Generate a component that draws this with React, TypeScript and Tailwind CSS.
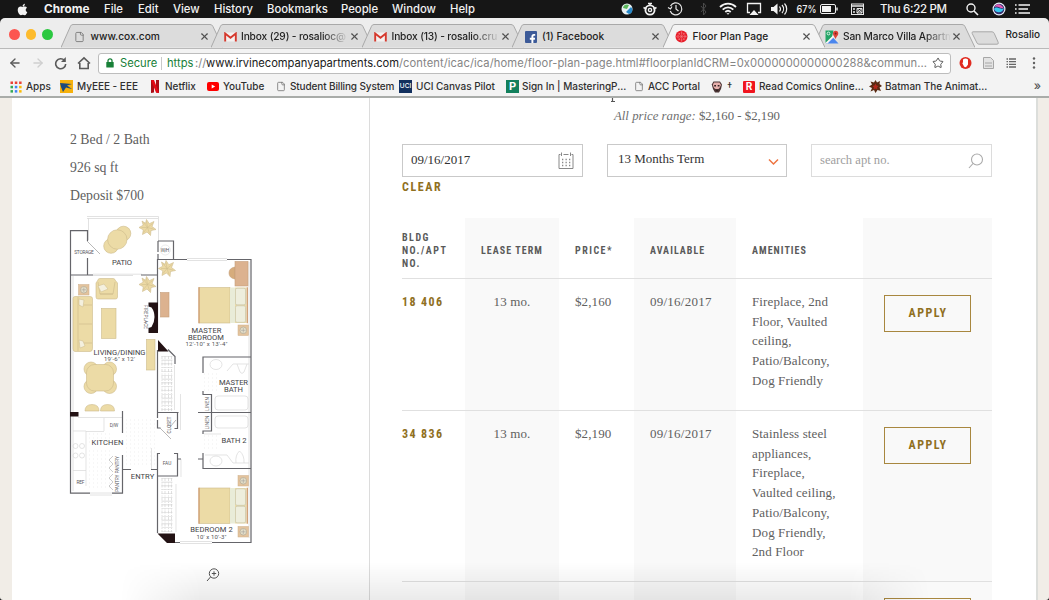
import type { ReactNode } from "react";
import {
  LuArrowLeft,
  LuArrowRight,
  LuFile,
  LuStar,
  LuX,
} from "react-icons/lu";
import { FaApple, FaFacebookF } from "react-icons/fa";

/* ---------- macOS menu bar ---------- */

const menus: [string, string][] = [
  ["File", "w-[34px]"],
  ["Edit", "w-[35px]"],
  ["View", "w-[41px]"],
  ["History", "w-[53px]"],
  ["Bookmarks", "w-[74px]"],
  ["People", "w-[51px]"],
  ["Window", "w-[58px]"],
  ["Help", "w-[40px]"],
];

function MenuBar() {
  return (
    <div className="flex h-[18px] shrink-0 items-center bg-[#161616] pt-[1px] pl-[16px] text-[11.3px] font-medium whitespace-nowrap text-[#f2f2f2]">
      <FaApple className="mr-[15px] mb-[1px] size-[13px]" />
      <span className="w-[60px] text-[11.8px] font-bold">Chrome</span>
      {menus.map(([label, width]) => (
        <span key={label} className={width}>
          {label}
        </span>
      ))}
      <svg className="mb-[1px] ml-[130px] h-[18px] w-[420px]" viewBox="620 0 420 18" fill="none">
        <circle cx="627" cy="9" r="5.5" fill="#e9f1f4" />
        <path d="M623 8a4 4 0 0 1 6-3l-2 4z" fill="#5cb85c" />
        <path d="M626 12l5-5a4 4 0 0 1-2 7z" fill="#2688c9" />
        <g stroke="#f2f2f2">
          <circle cx="650" cy="10" r="4.6" strokeWidth="1.8" />
          <circle cx="650" cy="10" r="1.6" strokeWidth="1.4" />
          <path d="M648 3.500h4M650 3.500v2M643.500 7.500l3 1.500M656.500 7.500l-3 1.500" strokeWidth="1.5" />
        </g>
        <g stroke="#e8e8e8" strokeWidth="1.2">
          <path d="M670.5 6a6 6 0 1 1-.3 5M668 7.5l2.5 1.5 1.5-2.5M676 5v4l2.500 2" />
        </g>
        <path d="M701 6l5 6-2.500 3V3l2.500 3-5 6" stroke="#4a4a4a" strokeWidth="1" />
        <g stroke="#f5f5f5" strokeWidth="1.8">
          <path d="M720 7c4.500-4.500 11.500-4.500 16 0M722.700 9.700c3-3 7.600-3 10.600 0M725.300 12c1.700-1.600 3.700-1.600 5.400 0" />
        </g>
        <path d="M726.500 13.200l1.500 1.600 1.500-1.600z" fill="#fff" />
        <path d="M750 12.500h-2.500v-9h13v9H758" stroke="#f2f2f2" strokeWidth="1.300" />
        <path d="M749.500 15l4.500-5 4.500 5z" fill="#f2f2f2" />
        <path d="M771 7h2.500l4-3.500v11l-4-3.500H771z" fill="#f2f2f2" />
        <path d="M779.500 6.500a4 4 0 0 1 0 5M782 5a6 6 0 0 1 0 8M784.500 3.500a8 8 0 0 1 0 11" stroke="#f2f2f2" strokeWidth="1.200" />
        <rect x="820.500" y="4.500" width="15" height="9" rx="1.500" stroke="#f2f2f2" />
        <rect x="822" y="6" width="9" height="6" fill="#f2f2f2" />
        <path d="M837 7.500v3" stroke="#f2f2f2" strokeWidth="1.400" />
        <rect x="851.500" y="4" width="12" height="10.500" stroke="#e8e8e8" />
        <path d="M851.500 6h12M853 9h2M853 12h2" stroke="#e8e8e8" strokeWidth="1.500" />
        <path d="M857 8.500h5v4.500h-5zM857 8.500l5 4.500M862 8.500l-5 4.500" stroke="#e8e8e8" />
        <circle cx="971" cy="8" r="4" stroke="#f2f2f2" strokeWidth="1.400" />
        <path d="M974 11l4 4" stroke="#f2f2f2" strokeWidth="1.600" />
        <circle cx="999" cy="9" r="6.500" fill="#e8ecf8" />
        <circle cx="999" cy="9" r="5.300" fill="#33306e" />
        <path d="M994 9c3-4 7 2 10-1-1 5-8 6-10 1z" fill="#37c8f0" />
        <path d="M994.500 7c3-5 7-2 9 1-3 1-6-3-9-1z" fill="#e25bb5" />
        <path d="M1015 5h1.600M1015 9h1.600M1015 13h1.600M1018.500 5H1030M1018.500 9H1028M1018.500 13H1030" stroke="#f5f5f5" strokeWidth="1.700" />
        <text x="796.500" y="13" fontSize="10.200" fontWeight="500" fill="#f2f2f2" textLength="20" lengthAdjust="spacingAndGlyphs">67%</text>
        <text x="880" y="13" fontSize="11.500" fontWeight="500" fill="#f2f2f2" textLength="67">Thu 6:22 PM</text>
      </svg>
    </div>
  );
}

/* ---------- small brand marks ---------- */

function Gmail() {
  return (
    <svg className="h-[10px] w-[13px]" viewBox="0 0 13 10">
      <path d="M1 .5h11v9H1z" fill="#f4f1f0" />
      <path d="M1.200 9.500v-8l5.300 4.200 5.300-4.200v8" fill="none" stroke="#d5392d" strokeWidth="1.900" />
    </svg>
  );
}

function Facebook() {
  return (
    <span className="flex size-[12px] items-end justify-center overflow-hidden rounded-[1px] bg-[#3c5a98]">
      <FaFacebookF className="-mb-px ml-[3px] size-[10px] text-white" />
    </span>
  );
}

function RedDisc() {
  return (
    <svg className="size-[13px]" viewBox="0 0 13 13" fill="none">
      <circle cx="6.500" cy="6.500" r="6" fill="#e8202c" />
      <circle cx="6.500" cy="6.500" r="3.600" stroke="#f9b5b8" strokeWidth=".6" strokeDasharray="1.300 1" />
      <path d="M6.500 1v11M1 6.500h11M2.600 2.600l7.800 7.800M10.400 2.600l-7.800 7.800" stroke="#f28a90" strokeWidth=".4" />
    </svg>
  );
}

function MapsIcon() {
  return (
    <svg className="size-[14px] shrink-0" viewBox="0 0 14 14">
      <rect x=".5" y=".5" width="13" height="13" rx="1" fill="#e3e3e1" />
      <path d="M.5.5h8L7 7 .5 13z" fill="#23a566" />
      <path d="M1 13.500L7.500 7l6 6.500z" fill="#4a86ee" />
      <path d="M.5 13L8 5.500l1 1.500L2.500 13.500z" fill="#f4f4f2" />
      <path d="M10.500 9C9 6 8 5.200 8 3.500a2.600 2.600 0 0 1 5.300 0C13.300 5.200 12 6 10.500 9z" fill="#dc4437" />
      <circle cx="10.600" cy="3.500" r=".9" fill="#7c1f18" />
      <circle cx="3.500" cy="3.500" r="1.400" fill="none" stroke="#fff" strokeWidth=".8" />
    </svg>
  );
}

function PageIcon() {
  return <LuFile className="h-[12px] w-[11px] text-[#7b7b7b]" />;
}

/* ---------- tab strip ---------- */

type TabProps = { icon: ReactNode; title: string; active?: boolean; fade?: boolean };

function Tab({ icon, title, active, fade }: TabProps) {
  return (
    <div className={active ? "relative z-10 -mr-[11.500px] h-[24px] w-[162px] shrink-0" : "relative -mr-[11.500px] h-[24px] w-[162px] shrink-0"}>
      <svg className="absolute inset-0 h-[24px] w-[162px]" viewBox="0 0 162 24">
        <path
          d="M0 23.500 9.500 2.200Q10.200.5 12 .5H149Q151 .5 151.800 2.200L162 23.500"
          fill={active ? "#f3f3f3" : "#dcdcdc"}
          stroke="#a9a9a9"
        />
        {active && <path d="M1 23.600H161" stroke="#f3f3f3" strokeWidth="1.500" />}
      </svg>
      <div className="relative flex h-full items-center pt-[1px] pl-[12px]">
        <span className="flex w-[14px] shrink-0 justify-center">{icon}</span>
        <span className={fade ? "ml-[4px] w-[108px] shrink-0 mask-r-from-75% tracking-[-0.150px] whitespace-nowrap" : "ml-[4px] w-[108px] shrink-0 whitespace-nowrap"}>
          {title}
        </span>
        <LuX className="size-[11px] shrink-0 text-[#505050]" strokeWidth={2.4} />
      </div>
    </div>
  );
}

function TabStrip() {
  return (
    <div className="flex h-[30px] shrink-0 items-end rounded-t-[5px] bg-[#ededed] pl-[9px] text-[10.200px] font-medium text-[#222]">
      <div className="mr-[8px] flex h-[27px] shrink-0 items-center gap-[6px]">
        <i className="size-[10.500px] rounded-full bg-[#fc5650]" />
        <i className="size-[10.500px] rounded-full bg-[#fdbb2d]" />
        <i className="size-[10.500px] rounded-full bg-[#2bc840]" />
      </div>
      <Tab icon={<PageIcon />} title="www.cox.com" />
      <Tab icon={<Gmail />} title="Inbox (29) - rosalioc@" fade />
      <Tab icon={<Gmail />} title="Inbox (13) - rosalio.cru" fade />
      <Tab icon={<Facebook />} title="(1) Facebook" />
      <Tab icon={<RedDisc />} title="Floor Plan Page" active />
      <Tab icon={<MapsIcon />} title="San Marco Villa Apartm" fade />
      <svg className="mb-[3px] ml-[7px] h-[14px] w-[30px] shrink-0" viewBox="0 0 30 14">
        <path d="M2 .8h19q1.500 0 2.200 1.500l4 9q.6 1.900-1.200 1.900H8q-1.500 0-2-1.200L1.200 2.500Q.6.800 2 .8z" fill="#dcdcdc" stroke="#a9a9a9" />
      </svg>
      <span className="mb-[6px] ml-[5px] text-[10px] whitespace-nowrap">Rosalio</span>
    </div>
  );
}

/* ---------- address bar ---------- */

function AddressBar() {
  return (
    <div className="flex h-[29px] shrink-0 items-center border-t border-[#b9b9b9] bg-[#f3f3f3] pl-[8px]">
      <LuArrowLeft className="size-[14px] text-[#5a5a5a]" strokeWidth={2.3} />
      <LuArrowRight className="ml-[9px] size-[14px] text-[#cfcfcf]" strokeWidth={2.3} />
      <svg className="ml-[8px] h-[14px] w-[40px]" viewBox="0 0 40 14" fill="none" stroke="#5a5a5a" strokeWidth="1.600">
        <path d="M11.500 4.500A5 5 0 1 0 12.700 8" />
        <path d="M12.800 1v5H8z" fill="#5a5a5a" stroke="none" />
        <path d="M25 7.500 31 1.800l6 5.700M26.800 7v5.500h8.400V7" />
      </svg>
      <div className="ml-[5px] flex h-[21px] w-[853px] shrink-0 items-center rounded-[3px] border border-[#bdbdbd] bg-white pl-[7px] text-[11.200px] whitespace-nowrap text-[#858585]">
        <svg className="h-[10px] w-[8px] shrink-0" viewBox="0 0 8 10">
          <rect x=".3" y="4" width="7.400" height="5.500" rx=".6" fill="#188038" />
          <path d="M2 4.500V2.800a2 2 0 0 1 4 0v1.700" fill="none" stroke="#188038" strokeWidth="1.300" />
        </svg>
        <span className="ml-[6px] w-[41px] shrink-0 text-[#188038]">Secure</span>
        <i className="mr-[5px] h-[13px] w-px shrink-0 bg-[#c9c9c9]" />
        <span className="w-[28px] shrink-0 text-[#188038]">https</span>
        <span className="w-[11px] shrink-0">://</span>
        <span className="w-[193px] shrink-0 tracking-[-0.030px] text-[#202020]">www.irvinecompanyapartments.com</span>
        <span className="w-[533px] shrink-0 tracking-[0.070px]">/content/icac/ica/home/floor-plan-page.html#floorplanIdCRM=0x0000000000000288&amp;commun...</span>
        <LuStar className="size-[12px] shrink-0 text-[#555]" strokeWidth={2} />
      </div>
      <svg className="ml-[7px] h-[16px] w-[80px] shrink-0" viewBox="958 0 80 16" fill="none">
        <circle cx="965.500" cy="8" r="6" fill="#e02b20" />
        <path d="M963 4.500q2.500-2 5 0v5q-2 4-4 2l-2-4 1 .5z" fill="#fff" />
        <path d="M983.500 2.500h7l3 3v8h-10z" fill="#e3e3e3" stroke="#a6a6a6" />
        <path d="M985 8h7M985 11h7" stroke="#a6a6a6" />
        <path d="M1006.500 4h1.500M1006.500 6.700h1.500M1006.500 9.400h1.500M1006.500 12h1.500M1009 4h7M1009 6.700h7M1009 9.400h7M1009 12h7" stroke="#666" strokeWidth="1.300" />
        <g fill="#606060">
          <circle cx="1034" cy="3.500" r="1.200" />
          <circle cx="1034" cy="8" r="1.200" />
          <circle cx="1034" cy="12.500" r="1.200" />
        </g>
      </svg>
    </div>
  );
}

/* ---------- bookmarks ---------- */

function AppsIcon() {
  const colors = ["#ea4335", "#ea4335", "#ea4335", "#34a853", "#4285f4", "#fbbc05", "#34a853", "#4285f4", "#fbbc05"];
  return (
    <svg className="size-[12px]" viewBox="0 0 12 12">
      {colors.map((c, i) => (
        <rect key={i} x={(i % 3) * 4.3 + 0.5} y={Math.floor(i / 3) * 4.3 + 0.5} width="2.500" height="2.500" fill={c} />
      ))}
    </svg>
  );
}

function Bookmark({ icon, iconWidth, label, width }: { icon: ReactNode; iconWidth: string; label: string; width: string }) {
  return (
    <div className={"flex shrink-0 items-center " + width}>
      <span className={"flex shrink-0 items-center " + iconWidth}>{icon}</span>
      <span className="whitespace-nowrap">{label}</span>
    </div>
  );
}

function Bookmarks() {
  return (
    <div className="flex h-[21px] shrink-0 items-center border-b-2 border-[#a9aca9] bg-[#f3f3f3] pl-[10px] text-[10px] font-medium tracking-[-0.020px] text-[#303030]">
      <Bookmark width="w-[50px]" iconWidth="w-[16px]" label="Apps" icon={<AppsIcon />} />
      <Bookmark
        width="w-[90px]"
        iconWidth="w-[17px]"
        label="MyEEE - EEE"
        icon={
          <svg className="size-[13px]" viewBox="0 0 13 13">
            <path d="M0 0h13v13H0z" fill="#f6b10c" />
            <path d="M0 3l12 1-5 1.500 5 3.500-6-1.500L3 12 1 7z" fill="#1c4a7d" />
          </svg>
        }
      />
      <Bookmark
        width="w-[57px]"
        iconWidth="w-[15px]"
        label="Netflix"
        icon={
          <svg className="h-[13px] w-[10px]" viewBox="0 0 10 13">
            <path d="M1 0h3v12.500L1 13zM6 0h3v13l-3-.5z" fill="#a90d15" />
            <path d="M1 0h3l5 13-3-.5z" fill="#e50914" />
          </svg>
        }
      />
      <Bookmark
        width="w-[69px]"
        iconWidth="w-[16px]"
        label="YouTube"
        icon={
          <svg className="h-[9px] w-[12px]" viewBox="0 0 12 9">
            <rect width="12" height="9" rx="2" fill="#f00" />
            <path d="M4.700 2.500v4l3.500-2z" fill="#fff" />
          </svg>
        }
      />
      <Bookmark
        width="w-[123px] tracking-[-0.130px]"
        iconWidth="w-[14px]"
        label="Student Billing System"
        icon={<LuFile className="h-[11px] w-[10px] text-[#777]" />}
      />
      <Bookmark
        width="w-[107px]"
        iconWidth="w-[17px]"
        label="UCI Canvas Pilot"
        icon={<span className="flex size-[13px] items-center justify-center bg-[#12305e] text-[6.500px] text-white">UCI</span>}
      />
      <Bookmark
        width="w-[128px]"
        iconWidth="w-[16px]"
        label="Sign In | MasteringP..."
        icon={<span className="flex size-[13px] items-center justify-center bg-[#12805c] text-[11px] font-bold text-white">P</span>}
      />
      <Bookmark width="w-[77px]" iconWidth="w-[14px]" label="ACC Portal" icon={<LuFile className="h-[11px] w-[10px] text-[#777]" />} />
      <Bookmark
        width="w-[32px]"
        iconWidth="w-[16px]"
        label="†"
        icon={
          <svg className="size-[12px]" viewBox="0 0 12 12">
            <path d="M2.500.5h6.500L11 3.500 10 8 8 11.500H4L2 8 .8 3.500z" fill="#4a3434" />
            <path d="M3 1.500h5.500L10 4 8.500 7l-1 1h-3L3 7 1.800 4z" fill="#e7b0ad" />
            <path d="M3.200 4h1.800v1.500H3.200zM6.700 4h1.800v1.500H6.700zM5 9h2v1H5z" fill="#332222" />
          </svg>
        }
      />
      <Bookmark
        width="w-[126px]"
        iconWidth="w-[16px]"
        label="Read Comics Online..."
        icon={<span className="flex size-[12px] items-center justify-center rounded-[1px] bg-[#f0141e] text-[10px] font-bold text-white">R</span>}
      />
      <Bookmark
        width="w-[149px]"
        iconWidth="w-[16px]"
        label="Batman The Animat..."
        icon={
          <svg className="size-[13px]" viewBox="0 0 13 13">
            <path d="M6.500 0 8 2.500 11 1l-.5 3L13 6l-2.500 1.500L12 11 8.500 10 6.500 13 5 10l-3.500 1.500L3 8 0 6.500 3 4.500 1.500 1.500 5 2.500z" fill="#5a2a12" />
            <path d="M6.500 3.500 7.500 5.500l2 .5-1.500 1.500.5 2-2-1-2 1 .5-2L3.500 6l2-.5z" fill="#b3261a" />
          </svg>
        }
      />
      <span className="mr-[8px] mb-[1px] ml-auto text-[12px] text-[#555]">»</span>
    </div>
  );
}

/* ---------- floor plan ---------- */

function Plant({ x, y }: { x: number; y: number }) {
  return (
    <g transform={`translate(${x} ${y})`}>
      <path
        d="M-1-8 1.800-3.800 6.500-6 4.500-1 8.500 2 3.500 3 3 8-.5 4.500-5 7-4.200 2.300-8.500 0-4.300-2.300-5.500-6.500-2-4.200z"
        fill="#ecd9a4"
        stroke="#cdbb8b"
        strokeWidth=".6"
      />
      <path d="M0 0-1-6M0 0 5-4M0 0l6 1.500M0 0l2 6M0 0l-4 5M0 0h-6M0 0l-4-5" stroke="#cdbb8b" strokeWidth=".5" />
    </g>
  );
}

function Lamp({ x, y }: { x: number; y: number }) {
  return (
    <g transform={`translate(${x} ${y})`}>
      <rect x="-5" y="-5" width="10.500" height="10.500" fill="#e3c39d" stroke="#cdae88" strokeWidth=".5" />
      <circle r="3.300" cx=".3" cy=".3" fill="#e6dfc8" stroke="#a7a595" strokeWidth=".6" />
      <path d="M-2 .3h4.600M.3-2v4.600" stroke="#999" strokeWidth=".5" />
    </g>
  );
}

function Bed({ y }: { y: number }) {
  return (
    <g transform={`translate(199 ${y})`} strokeWidth=".6">
      <rect width="31" height="35.500" fill="#ecdba6" stroke="#cdbb8b" />
      <path d="M0-.3v36" stroke="#cf9d72" strokeWidth="1.300" />
      <rect x="31" width="5" height="35.500" fill="#e9ecd8" />
      <rect x="36" width="11.500" height="35.500" fill="#ecdba6" />
      <rect x="36.500" y=".8" width="10" height="16.500" rx="1.500" fill="#eeeedd" stroke="#c4c2a8" />
      <rect x="36.500" y="18.300" width="10" height="16.500" rx="1.500" fill="#eeeedd" stroke="#c4c2a8" />
      <path d="M48.300-.3v36" stroke="#cf9d72" strokeWidth="1.300" />
    </g>
  );
}

function Hatch({ y, h }: { y: number; h: number }) {
  return (
    <g stroke="#d2d2d2" strokeWidth=".7">
      <path d={`M162 ${y}v${h}M165 ${y}v${h}M168.500 ${y}v${h}M171.500 ${y}v${h}`} strokeDasharray="3 1.500 1 1" />
      <path d={`M167 ${y}v${h}`} strokeWidth="11" strokeDasharray=".6 3.200" />
    </g>
  );
}

function FloorPlan() {
  return (
    <svg className="h-[340px] w-[200px]" viewBox="60 210 200 340" fill="none" fontFamily="Roboto, 'Liberation Sans', sans-serif">
      <path d="M87 216.500h71.500V241M87 218.500h71M88.500 218v22M93 274.200h49M93 275.500h40M187 258.500h40M187 260.500h40M90 493h22M90 495h22M180 541.500h32M180 543.500h32M249 262v276M73 276v215" stroke="#dadada" strokeWidth=".8" />
      <g stroke="#d8d8d8" strokeWidth=".7">
        <path d="M86 431v55M73 431h13M86 431.500h18M78 417.500h44M73 470.500h13M104 418v13M151.500 448v21M174.500 365v45M180.500 394v36M176 484v48M181 459v18" />
        <circle cx="75.500" cy="446" r="2.500" /><circle cx="82" cy="446" r="2.500" />
        <circle cx="75.500" cy="455.500" r="2.500" /><circle cx="82" cy="455.500" r="2.500" />
        <rect x="215" y="396" width="33" height="14" rx="3" /><rect x="215" y="416" width="33" height="12" rx="3" />
        <ellipse cx="216" cy="364.500" rx="6" ry="5" /><ellipse cx="216" cy="461" rx="6" ry="5" />
        <path d="M227 371l6-7h16M237 364l3 8q2 3 4 0l3-8M205 455h22l6 8h16M236 463q-1-8 3.500-12 5 4 4.500 12M204 434h17" />
      </g>
      <g stroke="#dedede" strokeWidth=".7" strokeDasharray=".7 3.300">
        {[434, 438, 442, 451, 455, 459, 463, 467, 471, 475, 479, 483, 487].map((y) => (
          <path key={y} d={`M89 ${y}h22`} />
        ))}
        {[420, 424, 428, 432, 436, 440, 444, 448, 452, 456, 460, 464].map((y) => (
          <path key={y} d={`M126 ${y}h30`} />
        ))}
        {[374, 378, 382, 386, 390, 436, 440, 444, 448].map((y) => (
          <path key={y} d={`M204 ${y}h14`} />
        ))}
      </g>
      <Hatch y={356} h={55} />
      <Hatch y={478} h={54} />
      <path
        d="M87.500 241v-10.300h-17V275H93M87.500 258v17M141 275h17M158 241h15.500v18M158 241v11M158 254v5M158 259.500h29M227 259.500h24V542.500H212M70.500 275v218.200H90M112 493.200h10.500V455M122.500 411v22M157.500 259v71M157.500 350v68M157.500 420v8h3M157.500 412.500h21M198 412.500h53M177.500 413v15.500h-3M168 349.500l7 7V364M203 373v-16h48M203 391v3.500h8.500v36.500H203v3M203 453v15.500h48M198 459h5M160 453.500h-2.500V533M174 453.500h3.500V476H158M177 459h4M122 469.500h9M151 469.500h6M167 542.500h13"
        stroke="#65656a"
        strokeWidth="1.200"
      />
      <path d="M87 241l13 13M160 428l11 11M170 427l6-7" stroke="#999" strokeWidth=".7" />
      <path
        d="M158 302.500h-9.500v4l3 1q3 4 3 9.500t-3 10l-3 1v5H158zM158 340v11.500h10.500zM157.500 533.500H175v9.500h-8zM70 412h8.500v4.500H70z"
        fill="#231214"
      />
      <path d="M113 456l-4 4 4 4M113 464l-4 4 4 4M113 474l-4 4 4 4M113 482l-4 4 4 4" stroke="#aaa" strokeWidth=".6" />
      <g fill="#ecdba6" stroke="#cdbb8b" strokeWidth=".6">
        <circle cx="123.500" cy="233.500" r="7.300" /><circle cx="111" cy="246" r="7.300" /><circle cx="117.300" cy="239.500" r="9.700" />
        <path d="M98 280q0-1.500 2-1.500h13q2 0 2 1.500l2.500 3v14q0 2-2 2H98q-2 0-2-2v-14z" />
        <path d="M98 282l2 12h13l2-12M100 294h13" />
        <path d="M75 296.500h15q2.500 0 2.500 2v50q0 3-2.500 3H75q-2 0-2-3v-50q0-2 2-2zM79 305h13M79 324h13M79 343h13M78 297v54" />
        <rect x="101.500" y="308.500" width="14.500" height="30" /><rect x="146.500" y="339.500" width="8.500" height="30.500" />
        <circle cx="91" cy="369" r="7" /><circle cx="109.500" cy="369" r="7" /><circle cx="91" cy="386.500" r="7" /><circle cx="109.500" cy="386.500" r="7" />
        <rect x="86.500" y="364.500" width="27" height="26.500" rx="8" />
        <path d="M85 411q0-6.500 7-6.500t7 6.500zM100.500 411q0-6.500 7-6.500t7 6.500z" />
      </g>
      <path d="M98 286l6-2 4 5-7 3zM79 299l5 1-1 7-4-2zM79 340l4 1 2 5-5 2z" fill="#f4f0de" stroke="#cdbb8b" strokeWidth=".5" />
      <g fill="#dcb28f" stroke="#c59f7b" strokeWidth=".6">
        <rect x="160.500" y="292.500" width="8.500" height="24.500" />
        <path d="M235 267q-6 1-6 6t6 6z" fill="#d6ac7c" />
        <rect x="235" y="261.500" width="13" height="24.500" />
      </g>
      <Plant x={147.500} y={227.500} /><Plant x={167} y={268.500} /><Plant x={147.500} y={284.500} />
      <Lamp x={83.500} y={289.500} /><Lamp x={243} y={330} /><Lamp x={243} y={480.500} /><Lamp x={243} y={531.500} />
      <Bed y={287.500} /><Bed y={488} />
      <circle cx="165.300" cy="250" r="5" stroke="#ddd" strokeWidth=".6" />
      <g fill="#424245" fontSize="7.600" textAnchor="middle">
        <text x="122" y="264.500" textLength="20">PATIO</text>
        <text x="206.500" y="333" textLength="30">MASTER</text>
        <text x="206" y="340" textLength="36">BEDROOM</text>
        <text x="119.500" y="354.500" textLength="52">LIVING/DINING</text>
        <text x="233.500" y="384.500" textLength="29">MASTER</text>
        <text x="233.500" y="391.500" textLength="19">BATH</text>
        <text x="107.500" y="444.800" textLength="32">KITCHEN</text>
        <text x="234" y="443" textLength="25">BATH 2</text>
        <text x="142.500" y="478.500" textLength="23.500">ENTRY</text>
        <text x="211.500" y="532" textLength="42.500">BEDROOM 2</text>
      </g>
      <g fill="#545458" fontSize="6" textAnchor="middle">
        <text x="206.500" y="346.300" textLength="42">{`12'-10" x 13'-4"`}</text>
        <text x="119.500" y="361" textLength="31">{`19'-6" x 12'`}</text>
        <text x="211.500" y="538.500" textLength="30">{`10' x 10'-3"`}</text>
      </g>
      <g fill="#5a5a5e" fontSize="4.800" textAnchor="middle">
        <text x="84" y="253.800" textLength="19.500">STORAGE</text>
        <text x="165" y="251.800" textLength="8.500">W/H</text>
        <text x="114" y="426.500" textLength="8.500">D/W</text>
        <text x="167" y="464.500" textLength="8.500">FAU</text>
        <text x="80.500" y="483.500" textLength="8">REF</text>
        <text transform="translate(144 317) rotate(90)" textLength="24">FIREPLACE</text>
        <text transform="translate(171 425) rotate(-90)" textLength="17">CLOSET</text>
        <text transform="translate(209 404) rotate(-90)" textLength="14">LINEN</text>
        <text transform="translate(209 422.500) rotate(-90)" textLength="14">LINEN</text>
        <text transform="translate(118.500 474) rotate(-90)" textLength="36">PANTRY PANTRY</text>
      </g>
    </svg>
  );
}

/* ---------- page content ---------- */

function UnitDetails() {
  return (
    <aside className="flex w-[358px] shrink-0 flex-col border-r border-[#dcdcdc] font-['Liberation_Serif',serif] text-[13.800px] text-[#606060]">
      <div className="flex flex-col pt-[28px] pl-[58px] leading-[28px]">
        <span>2 Bed / 2 Bath</span>
        <span>926 sq ft</span>
        <span>Deposit $700</span>
      </div>
      <div className="pl-[48px]">
        <FloorPlan />
      </div>
      <svg className="mt-[17px] ml-[194px] h-[16px] w-[16px] shrink-0" viewBox="0 0 16 16" fill="none" stroke="#555">
        <circle cx="8" cy="6.500" r="4.700" />
        <path d="M4.500 10 1 14M5.800 6.500h4.400M8 4.300v4.400" />
      </svg>
    </aside>
  );
}

const condensed = "font-['Liberation_Sans_Narrow','Roboto_Condensed','Liberation_Sans',sans-serif] font-bold";

const rows = [
  { unit: "18 406", price: "$2,160", height: "h-[132px]", amenities: ["Fireplace, 2nd", "Floor, Vaulted", "ceiling,", "Patio/Balcony,", "Dog Friendly"] },
  {
    unit: "34 836",
    price: "$2,190",
    height: "h-[171px]",
    amenities: ["Stainless steel", "appliances,", "Fireplace,", "Vaulted ceiling,", "Patio/Balcony,", "Dog Friendly,", "2nd Floor"],
  },
];

const grid = "grid shrink-0 grid-cols-[63px_94px_75px_102px_127px_129px] border-b border-[#e0e0e0]";

function ApplyButton() {
  return (
    <button className={"flex h-[37px] w-[87px] items-center justify-center border border-[#a8873f] pl-[1px] text-[12px] tracking-[1.500px] text-[#90701f] " + condensed}>
      APPLY
    </button>
  );
}

function UnitTable() {
  return (
    <div className="mt-[22px] flex w-[590px] shrink-0 flex-col">
      <div className={grid + " h-[61px] items-stretch text-[10px] leading-[13px] tracking-[1.050px] text-[#5a5a5a] " + condensed}>
        <div className="flex items-center pt-[4px] tracking-[1.500px]">
          BLDG
          <br />
          NO./APT
          <br />
          NO.
        </div>
        <div className="flex items-center bg-[#f9f9f9] pt-[4px] pl-[16px] whitespace-nowrap">LEASE TERM</div>
        <div className="flex items-center pt-[4px] pl-[16px] tracking-[1.500px]">PRICE*</div>
        <div className="flex items-center bg-[#f9f9f9] pt-[4px] pl-[16px]">AVAILABLE</div>
        <div className="flex items-center pt-[4px] pl-[16px]">AMENITIES</div>
        <div className="bg-[#f9f9f9]" />
      </div>
      {rows.map((r) => (
        <div key={r.unit} className={grid + " text-[13px] leading-[19.700px] tracking-[0.120px] text-[#606060] " + r.height}>
          <div className={"pt-[14px] text-[12px] tracking-[1.400px] text-[#90701f] " + condensed}>{r.unit}</div>
          <div className="bg-[#f9f9f9] pt-[13px] text-center">13 mo.</div>
          <div className="pt-[13px] pl-[16px]">{r.price}</div>
          <div className="bg-[#f9f9f9] pt-[13px] pl-[16px] tracking-[0.250px]">09/16/2017</div>
          <div className="flex flex-col pt-[13px] pl-[16px] whitespace-nowrap">
            {r.amenities.map((a) => (
              <span key={a}>{a}</span>
            ))}
          </div>
          <div className="bg-[#f9f9f9] pt-[16px] pl-[21px]">
            <ApplyButton />
          </div>
        </div>
      ))}
      <div className={grid + " h-[132px]"}>
        <div />
        <div className="bg-[#f9f9f9]" />
        <div />
        <div className="bg-[#f9f9f9]" />
        <div />
        <div className="bg-[#f9f9f9] pt-[16px] pl-[21px]">
          <div className="h-[37px] w-[87px] border border-[#a8873f]" />
        </div>
      </div>
    </div>
  );
}

function Listings() {
  return (
    <section className="flex min-w-0 flex-1 flex-col pl-[32px] font-['Liberation_Serif',serif]">
      <svg className="ml-[208px] h-[5px] w-[8px] shrink-0" viewBox="0 0 8 5">
        <path d="M2.500 0v3M1 3.500h4" stroke="#555" strokeWidth="1.200" />
      </svg>
      <div className="ml-[212px] h-[27px] shrink-0 text-[12.800px] leading-[27px] whitespace-nowrap text-[#646464]">
        <i className="text-[#707070]">All price range:</i> $2,160 - $2,190
      </div>
      <div className="mt-[14px] flex h-[33px] shrink-0 gap-[24px] text-[13px]">
        <div className="flex w-[181px] items-center justify-between border border-[#c9c9c9] pr-[8px] pl-[8px] text-[#333]">
          <span className="mb-[2px]">09/16/2017</span>
          <svg className="h-[18px] w-[16px]" viewBox="0 0 16 18" fill="none" stroke="#888">
            <path d="M2.500 2.500H1v14h14v-14h-1.500M5.500 2.500h5M3.500.5V4M12.500.5V4" />
            <path d="M4 7.500h9M4 10.500h9M4 13.500h9" strokeWidth="1.300" strokeDasharray="1.300 2.200" />
          </svg>
        </div>
        <div className="flex w-[180px] items-center justify-between border border-[#c9c9c9] pr-[7px] pl-[10px] text-[#333]">
          <span className="mb-[4px]">13 Months Term</span>
          <svg className="mt-[2px] h-[8px] w-[11px]" viewBox="0 0 11 8" fill="none" stroke="#ee7440" strokeWidth="1.500">
            <path d="M1 1.500 5.500 6 10 1.500" />
          </svg>
        </div>
        <div className="flex w-[181px] items-center justify-between border border-[#dcdcdc] pr-[7px] pl-[8px] text-[#a0a0a0]">
          <span className="mb-[1px] text-[12.600px]">search apt no.</span>
          <svg className="size-[16px]" viewBox="0 0 16 16" fill="none" stroke="#aaa" strokeWidth="1.100">
            <circle cx="9" cy="6.500" r="5.500" />
            <path d="M5 10.500 1 15" />
          </svg>
        </div>
      </div>
      <div className={"mt-[1px] h-[18px] shrink-0 text-[12px] leading-[18px] tracking-[1.600px] text-[#90701f] " + condensed}>CLEAR</div>
      <UnitTable />
    </section>
  );
}

export default function App() {
  return (
    <div className="relative flex h-[600px] w-[1049px] flex-col overflow-hidden bg-[#161616] font-['Inter',sans-serif]">
      <MenuBar />
      <TabStrip />
      <AddressBar />
      <Bookmarks />
      <main className="flex min-h-0 flex-1 overflow-hidden rounded-b-[3px] bg-[#f1ede7] pl-[12px]">
        <div className="flex w-[1026px] overflow-hidden border-r-2 border-[#dcdedb] bg-white">
          <UnitDetails />
          <Listings />
        </div>
      </main>
      <div className="pointer-events-none absolute bottom-0 left-[120px] h-[38px] w-[810px] bg-linear-to-b from-transparent to-black/8 mask-x-from-90%" />
    </div>
  );
}
